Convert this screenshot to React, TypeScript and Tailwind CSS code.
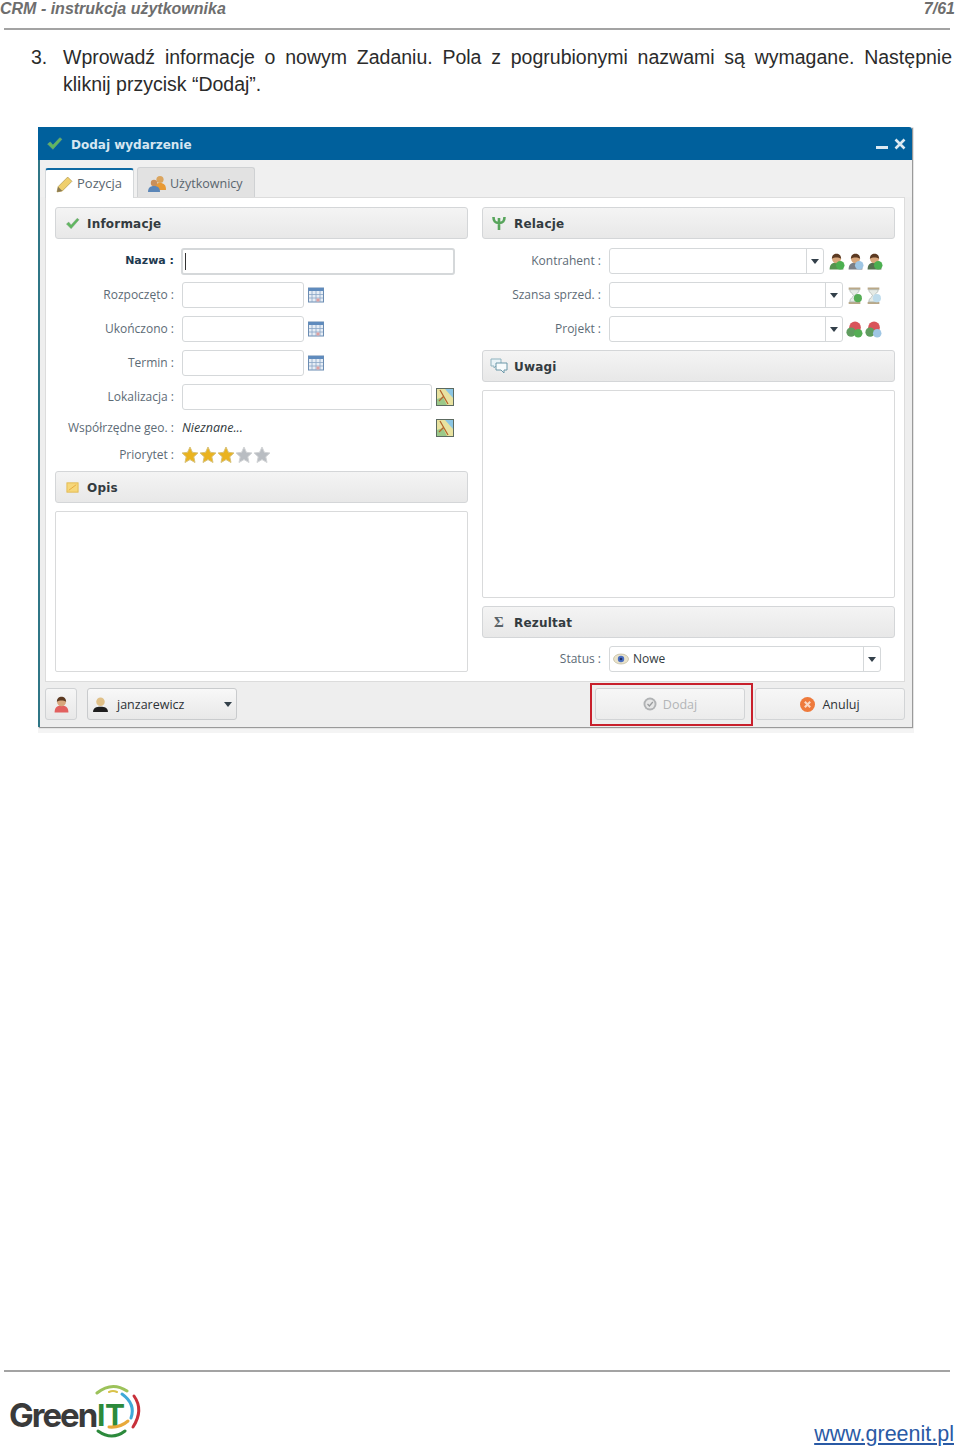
import type { ReactNode } from "react";

const UI_FONT = "font-['Open_Sans','Noto_Sans',sans-serif]";
const HEAD_FONT = "font-['DejaVu_Sans',sans-serif]";

function Check({ className = "" }: { className?: string }) {
  return (
    <svg viewBox="0 0 16 16" className={className}>
      <path d="M1.5 8.5 L4 6.5 L6.5 9.5 L13 2.5 L15 4 L6.5 13.5 Z" fill="#5fb85f" stroke="#7e9c7e" strokeWidth="0.5" />
    </svg>
  );
}

function Calendar() {
  return (
    <svg viewBox="0 0 16 16" className="w-4 h-4 shrink-0">
      <rect x="0.5" y="1" width="15" height="14" fill="#e6edf5" stroke="#6b8cb2" />
      <rect x="0.5" y="1" width="15" height="3" fill="#5f8bbd" />
      <path d="M4 4v11M8 4v11M12 4v11M1 7.5h14M1 11h14" stroke="#8aa6c6" strokeWidth="0.8" />
      <rect x="8.5" y="11.5" width="3" height="3" fill="#dfa0a0" />
    </svg>
  );
}

function MapIcon() {
  return (
    <svg viewBox="0 0 18 18" className="w-[18px] h-[18px] shrink-0">
      <rect x="0.5" y="0.5" width="17" height="17" fill="#e8e2a0" stroke="#5c6a60" />
      <path d="M9 1h8v9z" fill="#8cc6e4" />
      <path d="M1 17v-6l6-2 4 8z" fill="#9cc98a" />
      <path d="M4 2 L12 16 M3 13 L8 8" stroke="#b5652c" strokeWidth="1.3" />
    </svg>
  );
}

function Star({ on }: { on: boolean }) {
  return (
    <svg viewBox="0 0 18 18" className="w-[18px] h-[18px] shrink-0">
      <path
        d="M9 1 L11.4 6.3 L17 7 L12.8 10.8 L14 16.5 L9 13.6 L4 16.5 L5.2 10.8 L1 7 L6.6 6.3 Z"
        fill={on ? "#eab31f" : "#b9bdc2"}
        stroke={on ? "#d8c27a" : "#d2d4d6"}
      />
    </svg>
  );
}

function Person({ body, badge }: { body: string; badge?: string }) {
  return (
    <svg viewBox="0 0 16 16" className="w-[17px] h-[17px] shrink-0">
      <path d="M1.5 15.5c0-4 2-6.5 6.5-6.5s6.5 2.5 6.5 6.5z" fill={body} />
      <circle cx="8" cy="5.5" r="4.2" fill="#d8a77c" />
      <path d="M3.6 5.4C3.8 1.6 6 0.6 8 0.6s4.2 1 4.4 4.8C10 3.8 6 3.8 3.6 5.4z" fill="#5c3a22" />
      {badge && <circle cx="11.5" cy="11.5" r="4" fill={badge} />}
    </svg>
  );
}

function Hourglass({ badge }: { badge: string }) {
  return (
    <svg viewBox="0 0 16 16" className="w-[17px] h-[17px] shrink-0">
      <path d="M2.5 1.5h11M2.5 15h11" stroke="#b9a888" strokeWidth="2" />
      <path d="M3.5 2.5h9c0 3-3.5 4-3.5 5.5s3.5 2.5 3.5 6h-9C3.5 10.5 7 9.5 7 8S3.5 5.5 3.5 2.5z" fill="#e6ebe6" stroke="#aab4ae" strokeWidth="0.7" />
      <circle cx="11.2" cy="10.5" r="3.8" fill={badge} />
    </svg>
  );
}

function Gear({ badge }: { badge: string }) {
  return (
    <svg viewBox="0 0 16 16" className="w-[17px] h-[17px] shrink-0">
      <circle cx="8.5" cy="6" r="5.5" fill="#d9535a" />
      <circle cx="4.8" cy="10.5" r="4.4" fill="#5f9c5f" />
      <circle cx="11.5" cy="11.5" r="4" fill={badge} />
    </svg>
  );
}

function Caret() {
  return <span className="block w-0 h-0 border-x-[4px] border-x-transparent border-t-[5px] border-t-[#33404a]" />;
}

function Section({ icon, title }: { icon: ReactNode; title: string }) {
  return (
    <div className="h-[32px] shrink-0 flex items-center gap-2 pl-[9px] pt-[2px] rounded-[3px] border border-[#d4d6d8] bg-gradient-to-b from-[#f4f4f4] to-[#e8e8e8]">
      <span className="w-[14px] h-4 flex items-center justify-center shrink-0 -mt-[2px]">{icon}</span>
      <span className={`${HEAD_FONT} font-bold text-[12px] tracking-[0.2px] text-[#333b40]`}>{title}</span>
    </div>
  );
}

function Input({ className = "", children }: { className?: string; children?: ReactNode }) {
  return (
    <div className={`h-[26px] bg-white border border-[#d5d8da] rounded-[3px] flex items-center ${className}`}>
      {children}
    </div>
  );
}

function Combo({ className = "", children }: { className?: string; children?: ReactNode }) {
  return (
    <Input className={className}>
      <span className="flex-1 flex items-center min-w-0">{children}</span>
      <span className="w-[17px] h-full border-l border-[#d5d8da] flex items-center justify-center shrink-0">
        <Caret />
      </span>
    </Input>
  );
}

function Row({ label, strong, className = "h-[26px]", children }: { label: string; strong?: boolean; className?: string; children: ReactNode }) {
  return (
    <div className={`flex items-center ${className}`}>
      <span
        className={`w-[119px] shrink-0 text-right whitespace-nowrap ${
          strong ? `${HEAD_FONT} font-bold text-[11px] text-[#1f3a50]` : "text-[12px] text-[#5d6b76]"
        }`}
      >
        {label} :
      </span>
      <div className="ml-2 flex items-center flex-1 min-w-0">{children}</div>
    </div>
  );
}

function Dialog() {
  return (
    <div className={`${UI_FONT} ml-[38px] mt-[29px] w-[876px] h-[606px] bg-[#f4f4f4] flex flex-col`}>
      <div className="w-[874px] h-[600px] flex flex-col bg-[#eeeeee] border-l-2 border-[#2f7686] shadow-[1px_1px_1px_#9a9a9a]">
        <div className="h-[33px] shrink-0 bg-[#00609c] flex items-center pl-[8px] pr-[6px] -ml-[2px] rounded-tr-[3px]">
          <Check className="w-[17px] h-[17px]" />
          <span className={`${HEAD_FONT} font-bold text-[12px] text-[#d5e6f1] ml-[8px] mt-[3px]`}>Dodaj wydarzenie</span>
          <span className="ml-auto w-[12px] h-[3px] bg-[#dbe9f2] mt-[8px]" />
          <svg viewBox="0 0 12 12" className="w-3 h-3 ml-[6px]">
            <path d="M1.5 1.5 L10.5 10.5 M10.5 1.5 L1.5 10.5" stroke="#dbe9f2" strokeWidth="2.6" />
          </svg>
        </div>

        <div className="h-[37px] shrink-0 flex items-end pl-[5px] gap-[3px] bg-[#f0f0f0]">
          <div className="w-[89px] h-[30px] bg-white border-t-2 border-t-[#0f6aa3] border-x border-x-[#d5d8da] rounded-t-[3px] flex items-center pl-[10px] gap-[4px] -mb-px z-10">
            <svg viewBox="0 0 16 16" className="w-[17px] h-[17px] shrink-0">
              <path d="M1 15 L2 10 L11 1 L15 5 L6 14 Z" fill="#efcf6c" stroke="#b39b52" strokeWidth="0.7" />
              <path d="M1 15 L2 10 L6 14 Z" fill="#8a7a52" />
            </svg>
            <span className="text-[13px] text-[#59656e]">Pozycja</span>
          </div>
          <div className="w-[118px] h-[30px] bg-[#e2e2e2] border border-[#cfd1d3] border-b-0 rounded-t-[3px] flex items-center pl-[10px] pt-[3px] gap-[4px]">
            <svg viewBox="0 0 18 18" className="w-[18px] h-[18px] shrink-0">
              <circle cx="12" cy="4.5" r="3.6" fill="#dba55f" />
              <path d="M6 15c0-5 2-7 6-7s6 2 6 7z" fill="#e89a35" />
              <circle cx="6" cy="8" r="3.2" fill="#c98f5a" />
              <path d="M0 17c0-4 2-6 6-6s6 2 6 6z" fill="#5b86b8" />
            </svg>
            <span className="text-[12.5px] text-[#59656e]">Użytkownicy</span>
          </div>
        </div>

        <div className="h-[485px] shrink-0 w-[860px] ml-[5px] bg-white border border-[#dcdcdc] px-[9px] py-[9px] grid grid-cols-[413px_413px] gap-x-[14px]">
          <div className="flex flex-col gap-[8px] min-h-0">
            <Section icon={<Check className="w-[15px] h-[15px] shrink-0" />} title="Informacje" />
            <Row label="Nazwa" strong className="h-[26px] mt-[1px]">
              <Input className="w-[274px] h-[27px] -ml-px border-[#8ca3ba] border-2 pl-[2px]">
                <span className="w-px h-[17px] bg-[#333]" />
              </Input>
            </Row>
            <Row label="Rozpoczęto">
              <Input className="w-[122px]" />
              <span className="ml-1"><Calendar /></span>
            </Row>
            <Row label="Ukończono">
              <Input className="w-[122px]" />
              <span className="ml-1"><Calendar /></span>
            </Row>
            <Row label="Termin">
              <Input className="w-[122px]" />
              <span className="ml-1"><Calendar /></span>
            </Row>
            <Row label="Lokalizacja">
              <Input className="w-[250px]" />
              <span className="ml-1"><MapIcon /></span>
            </Row>
            <Row label="Współrzędne geo." className="h-[20px]">
              <span className="w-[254px] text-[12.5px] italic text-[#333b40]">Nieznane...</span>
              <MapIcon />
            </Row>
            <Row label="Priorytet" className="h-[17px]">
              <span className="flex -ml-px">
                {[true, true, true, false, false].map((on, i) => (
                  <Star key={i} on={on} />
                ))}
              </span>
            </Row>
            <Section
              icon={
                <svg viewBox="0 0 14 14" className="w-[13px] h-[13px] shrink-0">
                  <rect x="1" y="2" width="12" height="10" fill="#f6d77a" stroke="#e2b94e" />
                  <path d="M3 10 L11 4" stroke="#e6a73d" />
                </svg>
              }
              title="Opis"
            />
            <div className="flex-1 border border-[#d9dadb] rounded-[2px] bg-white" />
          </div>

          <div className="flex flex-col gap-[8px] min-h-0">
            <Section
              icon={
                <svg viewBox="0 0 14 16" className="w-[14px] h-4 shrink-0">
                  <path d="M7 15 V8 M7 8 C3 8 1.5 6 1.5 2 M7 8 C11 8 12.5 6 12.5 2 M7 7 V3" stroke="#58a55c" strokeWidth="2.6" fill="none" />
                </svg>
              }
              title="Relacje"
            />
            <Row label="Kontrahent" className="h-[26px] mt-[1px]">
              <Combo className="w-[215px]" />
              <span className="ml-1 flex gap-[2px]">
                <Person body="#55934f" badge="#4caf50" />
                <Person body="#7b7f86" badge="#9fc6e4" />
                <Person body="#55704f" badge="#4caf50" />
              </span>
            </Row>
            <Row label="Szansa sprzed.">
              <Combo className="w-[234px]" />
              <span className="ml-[3px] flex gap-[2px]">
                <Hourglass badge="#55ad55" />
                <Hourglass badge="#bfdcec" />
              </span>
            </Row>
            <Row label="Projekt">
              <Combo className="w-[234px]" />
              <span className="ml-[3px] flex gap-[2px]">
                <Gear badge="#55ad55" />
                <Gear badge="#9fc6e4" />
              </span>
            </Row>
            <Section
              icon={
                <svg viewBox="0 0 18 16" className="w-[18px] h-4 shrink-0">
                  <path d="M1 1h10v7H6l-2 2V8H1z" fill="#e9f3f7" stroke="#8fb3bf" />
                  <path d="M6 5h11v7h-3v3l-3-3H6z" fill="#f7fbfc" stroke="#6b97a8" />
                </svg>
              }
              title="Uwagi"
            />
            <div className="h-[208px] shrink-0 border border-[#d9dadb] rounded-[2px] bg-white" />
            <Section icon={<span className="font-['Liberation_Serif',serif] text-[15px] text-[#5a6268] font-bold">Σ</span>} title="Rezultat" />
            <Row label="Status">
              <Combo className="w-[272px]">
                <svg viewBox="0 0 16 12" className="w-4 h-3 ml-[3px] shrink-0">
                  <ellipse cx="8" cy="6" rx="7.5" ry="5" fill="#e9e3cc" stroke="#b5ab8a" strokeWidth="0.6" />
                  <circle cx="8" cy="6" r="3.2" fill="#4b6fc0" />
                  <circle cx="8" cy="6" r="1.3" fill="#1f2f66" />
                </svg>
                <span className="ml-[4px] text-[12px] text-[#333b40]">Nowe</span>
              </Combo>
            </Row>
          </div>
        </div>

        <div className="flex-1 flex items-start pt-[6px] pl-[5px] pr-[7px]">
          <div className="w-[32px] h-[32px] border border-[#d0d2d4] rounded-[3px] bg-gradient-to-b from-[#f6f6f6] to-[#e8e8e8] flex items-center justify-center">
            <Person body="#e2605f" />
          </div>
          <div className="ml-[10px] w-[150px] h-[32px] border border-[#c9cbcd] rounded-[3px] bg-gradient-to-b from-[#f8f8f8] to-[#e8e8e8] flex items-center pl-[4px] pr-[4px]">
            <svg viewBox="0 0 16 16" className="w-[17px] h-[17px] shrink-0">
              <path d="M1 15c0-4 3-5 7-5s7 1 7 5z" fill="#1e1e1e" />
              <circle cx="8" cy="5.5" r="4" fill="#e0c088" />
            </svg>
            <span className="ml-[8px] mt-[3px] text-[12.5px] text-[#2d3236]">janzarewicz</span>
            <span className="ml-auto"><Caret /></span>
          </div>
          <div className="ml-auto relative">
            <div className="w-[150px] h-[32px] border border-[#d2d4d6] rounded-[3px] bg-gradient-to-b from-[#f7f7f7] to-[#ececec] flex items-center justify-center gap-[6px]">
              <svg viewBox="0 0 14 14" className="w-[14px] h-[14px] shrink-0">
                <circle cx="7" cy="7" r="6.5" fill="#b0b2b4" />
                <circle cx="7" cy="7" r="4.6" fill="#e6e6e6" />
                <path d="M4.5 7 L6.4 9 L9.8 5" stroke="#9a9c9e" strokeWidth="1.3" fill="none" />
              </svg>
              <span className="mt-[3px] text-[12.5px] text-[#b3b5b7]">Dodaj</span>
            </div>
            <div className="absolute left-[-5px] right-[-8px] top-[-5px] bottom-[-6px] border-2 border-[#c8202c]" />
          </div>
          <div className="ml-[10px] w-[150px] h-[32px] border border-[#d2d4d6] rounded-[3px] bg-gradient-to-b from-[#f7f7f7] to-[#ececec] flex items-center justify-center gap-[7px]">
            <svg viewBox="0 0 14 14" className="w-[15px] h-[15px] shrink-0">
              <circle cx="7" cy="7" r="7" fill="#ee7a3c" />
              <path d="M4.5 4.5 L9.5 9.5 M9.5 4.5 L4.5 9.5" stroke="#f9d9c6" strokeWidth="2" />
            </svg>
            <span className="mt-[3px] text-[12.5px] text-[#2d3236]">Anuluj</span>
          </div>
        </div>
      </div>
    </div>
  );
}

function Logo() {
  return (
    <svg viewBox="0 0 150 60" className="w-[150px] h-[60px]">
      <text x="9" y="47" fontFamily="Inter, sans-serif" fontWeight="700" fontSize="33" letterSpacing="-2" fill="#3a3a3a">
        Green
      </text>
      <text x="97" y="46" fontFamily="Inter, sans-serif" fontWeight="700" fontSize="30" letterSpacing="-0.5" fill="#2c8a3c">
        IT
      </text>
      <g fill="none" strokeLinecap="round">
        <path d="M97 13 Q112 1 127 11" stroke="#9cc25a" strokeWidth="3" />
        <path d="M109 12 Q113 10 117 12" stroke="#d9c24a" strokeWidth="2" />
        <path d="M122 14 Q136 24 131 38" stroke="#3fa9d8" strokeWidth="3" />
        <path d="M134 16 Q144 30 133 47" stroke="#c8303a" strokeWidth="3" />
        <path d="M109 47 Q120 48 128 41" stroke="#e8a93a" strokeWidth="3" />
        <path d="M98 51 Q112 61 125 51" stroke="#2c8a3c" strokeWidth="3" />
      </g>
    </svg>
  );
}

export default function App() {
  return (
    <div className="relative w-[960px] h-[1448px] bg-white font-['Liberation_Sans',Arial,sans-serif] flex flex-col overflow-hidden">
      <div className="h-[17px] flex items-center justify-between pr-[5px] text-[16px] font-bold italic text-[#6e6e6e]">
        <span>CRM - instrukcja użytkownika</span>
        <span>7/61</span>
      </div>
      <div className="mt-[11px] ml-[4px] w-[946px] h-[2px] bg-[#a3a3a3]" />

      <div className="mt-[14px] flex text-[19.5px] leading-[27px] text-[#2b2b2b]">
        <span className="ml-[31px] w-[32px] shrink-0">3.</span>
        <p className="w-[889px] text-justify">
          Wprowadź informacje o nowym Zadaniu. Pola z pogrubionymi nazwami są wymagane. Następnie kliknij przycisk “Dodaj”.
        </p>
      </div>

      <Dialog />

      <div className="mt-auto">
        <div className="ml-[4px] w-[946px] h-[2px] bg-[#a3a3a3]" />
        <div className="h-[76px] flex items-end justify-between">
          <div className="mb-[8px]"><Logo /></div>
          <a className="mr-[6px] mb-[1px] text-[21.5px] leading-[26px] text-[#2a5aa5] underline">www.greenit.pl</a>
        </div>
      </div>
    </div>
  );
}
